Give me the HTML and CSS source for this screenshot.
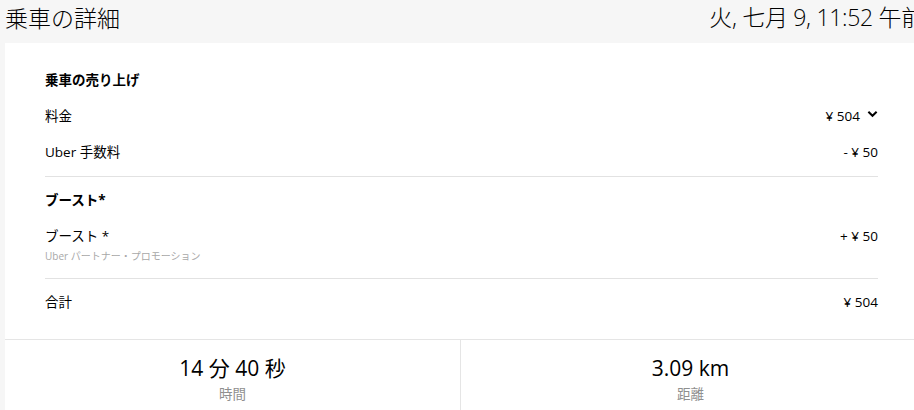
FILE: index.html
```html
<!DOCTYPE html>
<html lang="ja">
<head>
<meta charset="utf-8">
<title>乗車の詳細</title>
<link rel="stylesheet" href="styles.css">
</head>
<body>
<div class="page">
  <header class="top">
    <h1 class="title">乗車の詳細</h1>
    <div class="date">火, 七月 9, 11:52 午前</div>
  </header>
  <main class="card">
    <div class="body">
      <section class="section">
        <div class="row head"><span>乗車の売り上げ</span></div>
        <div class="row"><span>料金</span><span class="val">¥ 504 <svg class="chev" viewBox="0 0 12 8" width="11" height="8"><path d="M1.5 1.5 L6 6 L10.5 1.5" fill="none" stroke="#000" stroke-width="2.2"/></svg></span></div>
        <div class="row"><span>Uber 手数料</span><span class="val">- ¥ 50</span></div>
      </section>
      <section class="section">
        <div class="row head"><span>ブースト*</span></div>
        <div class="row two">
          <div class="lab"><span>ブースト *</span><span class="sub">Uber パートナー・プロモーション</span></div>
          <span class="val">+ ¥ 50</span>
        </div>
      </section>
      <section class="section last">
        <div class="row"><span>合計</span><span class="val">¥ 504</span></div>
      </section>
    </div>
    <div class="stats">
      <div class="stat"><div class="num">14 分 40 秒</div><div class="cap">時間</div></div>
      <div class="stat"><div class="num">3.09 km</div><div class="cap">距離</div></div>
    </div>
  </main>
</div>
</body>
</html>
```
FILE: styles.css
```css
html, body {
  margin: 0;
  padding: 0;
  overflow: hidden;
  background: #f6f6f6;
}
body {
  font-family: "Open Sans", "Noto Sans CJK JP", sans-serif;
  color: #000;
}
.page {
  width: 911px;
  padding-left: 5px;
}
.top {
  display: flex;
  justify-content: space-between;
  align-items: center;
  height: 43px;
}
.title {
  margin: 0;
  font-size: 23px;
  font-weight: 300;
  line-height: 32px;
  margin-top: -10px;
  font-family: "Noto Sans CJK JP", sans-serif;
}
.date {
  font-size: 23px;
  font-weight: 300;
  line-height: 32px;
  margin-top: -10px;
  margin-right: -8px;
  white-space: nowrap;
  letter-spacing: -0.3px;
}
.card {
  background: #fff;
  margin-right: -4px;
}
.body {
  padding: 14px 42px 13px 40px;
}
.section {
  padding: 5px 0 6px;
  border-bottom: 1px solid #e2e2e2;
}
.section.last {
  border-bottom: none;
}
.row {
  display: flex;
  justify-content: space-between;
  align-items: flex-start;
  padding: 8px 0;
  font-size: 13.5px;
  line-height: 20px;
}
.row.head {
  font-weight: 700;
}
.lab {
  display: flex;
  flex-direction: column;
}
.sub {
  font-size: 10px;
  line-height: 16px;
  margin-top: 2px;
  color: #a8a8a8;
}
.val {
  display: flex;
  align-items: center;
  gap: 4px;
  white-space: nowrap;
}
.chev {
  margin-left: 3px;
  margin-top: -5px;
}
.stats {
  display: grid;
  grid-template-columns: 455px 1fr;
  border-top: 1px solid #e5e5e5;
}
.stat {
  text-align: center;
  padding-top: 13px;
  height: 72px;
}
.stat + .stat {
  border-left: 1px solid #e5e5e5;
}
.num {
  font-size: 21px;
  font-weight: 400;
  line-height: 30px;
}
.cap {
  font-size: 13.5px;
  line-height: 20px;
  color: #8f8f8f;
  margin-top: 1px;
}
```
